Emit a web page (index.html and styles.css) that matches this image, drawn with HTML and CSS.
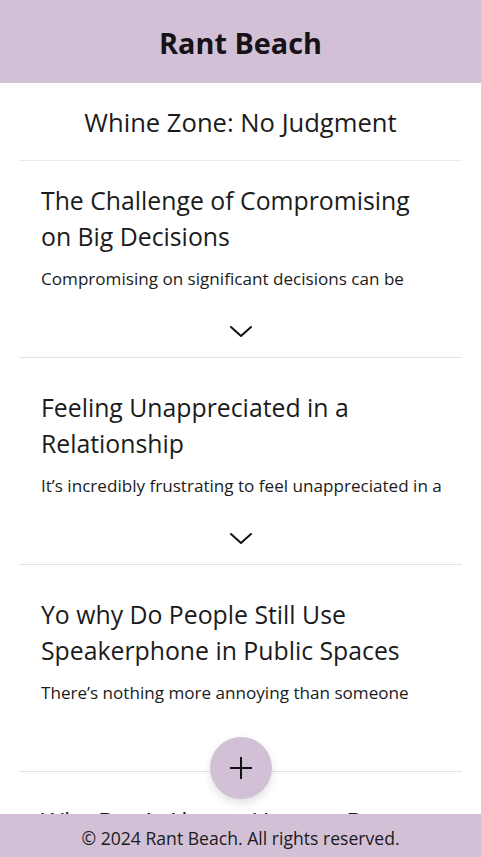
FILE: index.html
```html
<!DOCTYPE html>
<html lang="en">
<head>
<meta charset="utf-8">
<title>Rant Beach</title>
<link rel="stylesheet" href="styles.css">
</head>
<body>
<header class="site-header">
  <h1 class="site-title">Rant Beach</h1>
</header>
<main class="content">
  <h2 class="zone-title">Whine Zone: No Judgment</h2>
  <ul class="rant-list">
    <li class="rant-card">
      <h3 class="rant-title">The Challenge of Compromising on Big Decisions</h3>
      <p class="rant-body">Compromising on significant decisions can be</p>
      <button class="expand-btn" aria-label="Expand">
        <svg width="24" height="24" viewBox="0 0 24 24" fill="none" stroke="currentColor" stroke-width="2" stroke-linecap="round" stroke-linejoin="round"><polyline points="2 8 12 17 22 8"/></svg>
      </button>
    </li>
    <li class="rant-card">
      <h3 class="rant-title">Feeling Unappreciated in a Relationship</h3>
      <p class="rant-body">It’s incredibly frustrating to feel unappreciated in a</p>
      <button class="expand-btn" aria-label="Expand">
        <svg width="24" height="24" viewBox="0 0 24 24" fill="none" stroke="currentColor" stroke-width="2" stroke-linecap="round" stroke-linejoin="round"><polyline points="2 8 12 17 22 8"/></svg>
      </button>
    </li>
    <li class="rant-card">
      <h3 class="rant-title">Yo why Do People Still Use Speakerphone in Public Spaces</h3>
      <p class="rant-body">There’s nothing more annoying than someone</p>
      <button class="expand-btn" aria-label="Expand">
        <svg width="24" height="24" viewBox="0 0 24 24" fill="none" stroke="currentColor" stroke-width="2" stroke-linecap="round" stroke-linejoin="round"><polyline points="2 8 12 17 22 8"/></svg>
      </button>
    </li>
    <li class="rant-card rant-card-partial">
      <h3 class="rant-title">Why Don’t Always Have to Be Right</h3>
    </li>
  </ul>
</main>
<button class="fab" aria-label="New rant">
  <svg width="28" height="28" viewBox="0 0 28 28" fill="none" stroke="currentColor" stroke-width="2"><line x1="14" y1="3" x2="14" y2="25"/><line x1="3" y1="14" x2="25" y2="14"/></svg>
</button>
<footer class="site-footer">© 2024 Rant Beach. All rights reserved.</footer>
</body>
</html>
```
FILE: styles.css
```css
* { box-sizing: border-box; }
html, body { margin: 0; padding: 0; }
body {
  font-family: "Open Sans", "Noto Sans", sans-serif;
  color: #1b1b1b;
  background: #ffffff;
  height: 857px;
  overflow: hidden;
}
.site-header {
  background: #d1c0d6;
  height: 83px;
  padding-top: 4px;
  display: flex;
  align-items: center;
  justify-content: center;
}
.site-title {
  margin: 0;
  font-size: 28.8px;
  font-weight: 700;
  line-height: 1;
  color: #171217;
}
.content {
  padding: 0 19px;
}
.zone-title {
  margin: 0;
  height: 78px;
  display: flex;
  align-items: center;
  justify-content: center;
  font-size: 25.6px;
  font-weight: 500;
  border-bottom: 1px solid #e9e9ee;
  padding-top: 2px;
}
.rant-list {
  list-style: none;
  margin: 0;
  padding: 0;
}
.rant-card {
  padding: 21px 22px 14px;
  border-bottom: 1px solid #e3e3e3;
  margin-bottom: 10px;
  display: flex;
  flex-direction: column;
}
.rant-title {
  margin: 0 0 12px;
  font-size: 24.8px;
  line-height: 36px;
  font-weight: 500;
}
.rant-body {
  margin: 0;
  font-size: 17.1px;
  line-height: 26px;
  white-space: nowrap;
}
.expand-btn {
  align-self: center;
  margin-top: 27px;
  width: 24px;
  height: 24px;
  padding: 0;
  border: 0;
  background: none;
  color: #111;
  display: flex;
}
.fab {
  position: fixed;
  left: 210px;
  top: 737px;
  width: 62px;
  height: 62px;
  border-radius: 50%;
  border: 0;
  background: #d1c0d6;
  color: #111;
  display: flex;
  align-items: center;
  justify-content: center;
  padding: 0;
  box-shadow: 0 4px 10px rgba(0,0,0,0.12);
}
.site-footer {
  position: fixed;
  left: 0;
  right: 0;
  bottom: 0;
  height: 43px;
  padding-top: 5px;
  background: #d1c0d6;
  display: flex;
  align-items: center;
  justify-content: center;
  font-size: 17.6px;
  color: #1b1b1b;
}
```
